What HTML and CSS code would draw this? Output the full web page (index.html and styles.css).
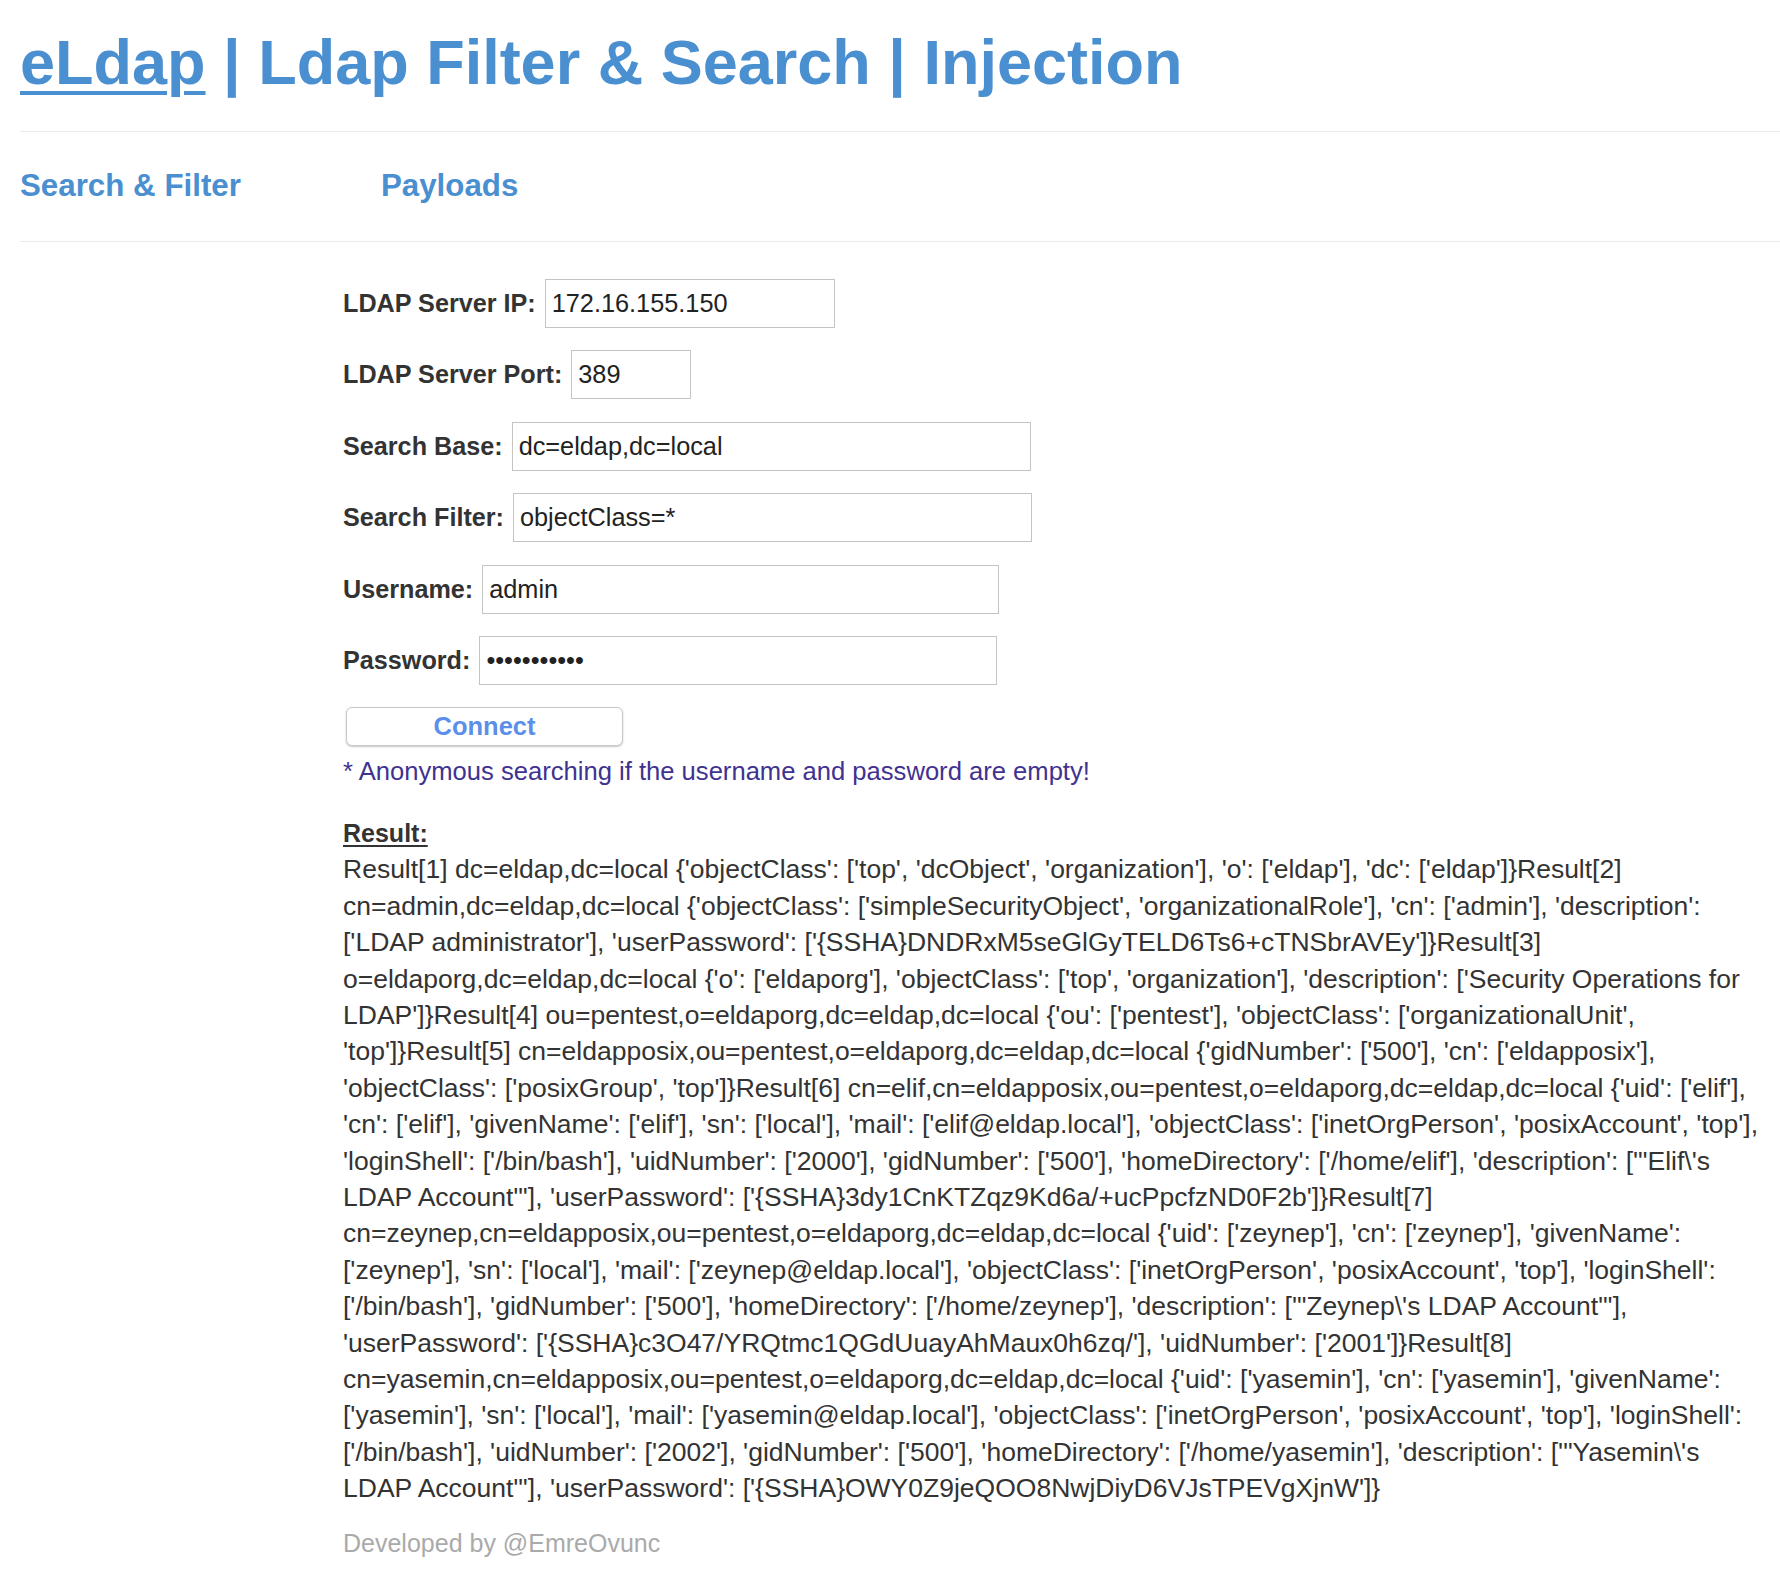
FILE: index.html
```html
<!DOCTYPE html>
<html lang="en">
<head>
<meta charset="utf-8">
<title>eLdap | Ldap Filter &amp; Search | Injection</title>
<link rel="stylesheet" href="styles.css">
</head>
<body>
<div class="page">
  <header class="site-header">
    <h1 class="title"><a href="#" class="brand">eLdap</a> | Ldap Filter &amp; Search | Injection</h1>
  </header>
  <nav class="tabs">
    <a href="#" class="tab">Search &amp; Filter</a>
    <a href="#" class="tab tab-payloads">Payloads</a>
  </nav>
  <main class="content">
    <form class="ldap-form">
      <div class="row"><label class="lbl">LDAP Server IP:</label><input class="field w-ip" type="text" value="172.16.155.150"></div>
      <div class="row"><label class="lbl">LDAP Server Port:</label><input class="field w-port" type="text" value="389"></div>
      <div class="row"><label class="lbl">Search Base:</label><input class="field w-long" type="text" value="dc=eldap,dc=local"></div>
      <div class="row"><label class="lbl">Search Filter:</label><input class="field w-long" type="text" value="objectClass=*"></div>
      <div class="row"><label class="lbl">Username:</label><input class="field w-user" type="text" value="admin"></div>
      <div class="row"><label class="lbl">Password:</label><input class="field w-pass" type="password" value="secretpass1"></div>
      <button type="button" class="connect">Connect</button>
    </form>
    <p class="note">* Anonymous searching if the username and password are empty!</p>
    <section class="result">
      <div class="result-title">Result:</div>
      <div class="result-text">Result[1] dc=eldap,dc=local {'objectClass': ['top', 'dcObject', 'organization'], 'o': ['eldap'], 'dc': ['eldap']}Result[2] cn=admin,dc=eldap,dc=local {'objectClass': ['simpleSecurityObject', 'organizationalRole'], 'cn': ['admin'], 'description': ['LDAP administrator'], 'userPassword': ['{SSHA}DNDRxM5seGlGyTELD6Ts6+cTNSbrAVEy']}Result[3] o=eldaporg,dc=eldap,dc=local {'o': ['eldaporg'], 'objectClass': ['top', 'organization'], 'description': ['Security Operations for LDAP']}Result[4] ou=pentest,o=eldaporg,dc=eldap,dc=local {'ou': ['pentest'], 'objectClass': ['organizationalUnit', 'top']}Result[5] cn=eldapposix,ou=pentest,o=eldaporg,dc=eldap,dc=local {'gidNumber': ['500'], 'cn': ['eldapposix'], 'objectClass': ['posixGroup', 'top']}Result[6] cn=elif,cn=eldapposix,ou=pentest,o=eldaporg,dc=eldap,dc=local {'uid': ['elif'], 'cn': ['elif'], 'givenName': ['elif'], 'sn': ['local'], 'mail': ['elif@eldap.local'], 'objectClass': ['inetOrgPerson', 'posixAccount', 'top'], 'loginShell': ['/bin/bash'], 'uidNumber': ['2000'], 'gidNumber': ['500'], 'homeDirectory': ['/home/elif'], 'description': ['"Elif\'s LDAP Account"'], 'userPassword': ['{SSHA}3dy1CnKTZqz9Kd6a/+ucPpcfzND0F2b']}Result[7] cn=zeynep,cn=eldapposix,ou=pentest,o=eldaporg,dc=eldap,dc=local {'uid': ['zeynep'], 'cn': ['zeynep'], 'givenName': ['zeynep'], 'sn': ['local'], 'mail': ['zeynep@eldap.local'], 'objectClass': ['inetOrgPerson', 'posixAccount', 'top'], 'loginShell': ['/bin/bash'], 'gidNumber': ['500'], 'homeDirectory': ['/home/zeynep'], 'description': ['"Zeynep\'s LDAP Account"'], 'userPassword': ['{SSHA}c3O47/YRQtmc1QGdUuayAhMaux0h6zq/'], 'uidNumber': ['2001']}Result[8] cn=yasemin,cn=eldapposix,ou=pentest,o=eldaporg,dc=eldap,dc=local {'uid': ['yasemin'], 'cn': ['yasemin'], 'givenName': ['yasemin'], 'sn': ['local'], 'mail': ['yasemin@eldap.local'], 'objectClass': ['inetOrgPerson', 'posixAccount', 'top'], 'loginShell': ['/bin/bash'], 'uidNumber': ['2002'], 'gidNumber': ['500'], 'homeDirectory': ['/home/yasemin'], 'description': ['"Yasemin\'s LDAP Account"'], 'userPassword': ['{SSHA}OWY0Z9jeQOO8NwjDiyD6VJsTPEVgXjnW']}</div>
    </section>
    <footer class="credit">Developed by @EmreOvunc</footer>
  </main>
</div>
</body>
</html>
```
FILE: styles.css
```css
html, body {
  margin: 0;
  padding: 0;
  background: #fff;
}
body {
  font-family: "Liberation Sans", Helvetica, Arial, sans-serif;
  color: #333;
  font-size: 25px;
}
.page {
  padding-left: 20px;
}
.title {
  margin: 25px 0 0;
  padding-bottom: 32px;
  font-size: 63px;
  line-height: 74px;
  font-weight: bold;
  color: #4a8fd0;
  white-space: nowrap;
}
.brand {
  color: #4a8fd0;
  text-decoration: underline;
  text-decoration-thickness: 4px;
  text-underline-offset: 7px;
}
.tabs {
  border-top: 1px solid #eaeaea;
  border-bottom: 1px solid #eaeaea;
  padding: 36px 0 37px;
  display: flex;
  font-size: 31.3px;
  line-height: 36px;
  font-weight: bold;
}
.tab {
  color: #4a8fd0;
  text-decoration: none;
}
.tab-payloads {
  margin-left: 140px;
}
.content {
  padding: 37px 20px 0 323px;
}
.ldap-form {
  margin: 0;
}
.row {
  display: flex;
  align-items: center;
  height: 49px;
  margin-bottom: 22.4px;
}
.lbl {
  font-weight: bold;
  font-size: 25.2px;
  color: #333;
  margin-right: 9px;
}
.field {
  box-sizing: border-box;
  height: 49px;
  border: 1px solid #c4c4c4;
  border-radius: 0;
  padding: 0 6px;
  font-family: "Liberation Sans", Helvetica, Arial, sans-serif;
  font-size: 25.3px;
  color: #222;
  background: #fff;
  outline: none;
}
.w-ip { width: 290px; }
.w-port { width: 120px; }
.w-long { width: 519px; }
.w-user { width: 517px; }
.w-pass { width: 518px; }
.connect {
  display: block;
  margin: 1px 0 0 3px;
  width: 277px;
  height: 39px;
  background: #fff;
  border: 1px solid #c8c8c8;
  border-radius: 6px;
  box-shadow: 0 1px 2px rgba(0, 0, 0, 0.22);
  font-family: "Liberation Sans", Helvetica, Arial, sans-serif;
  font-weight: bold;
  font-size: 25.5px;
  color: #5b8fea;
  padding: 0;
}
.note {
  margin: 10px 0 0;
  font-size: 25.6px;
  line-height: 30px;
  color: #3f3290;
}
.result {
  margin-top: 29px;
  line-height: 36.4px;
}
.result-title {
  font-weight: bold;
  font-size: 25px;
  text-decoration: underline;
  text-underline-offset: 3px;
  line-height: 36px;
}
.result-text {
  font-size: 26.5px;
  word-wrap: break-word;
}
.credit {
  margin-top: 22px;
  font-size: 25px;
  line-height: 28px;
  color: #aaa;
}
```
